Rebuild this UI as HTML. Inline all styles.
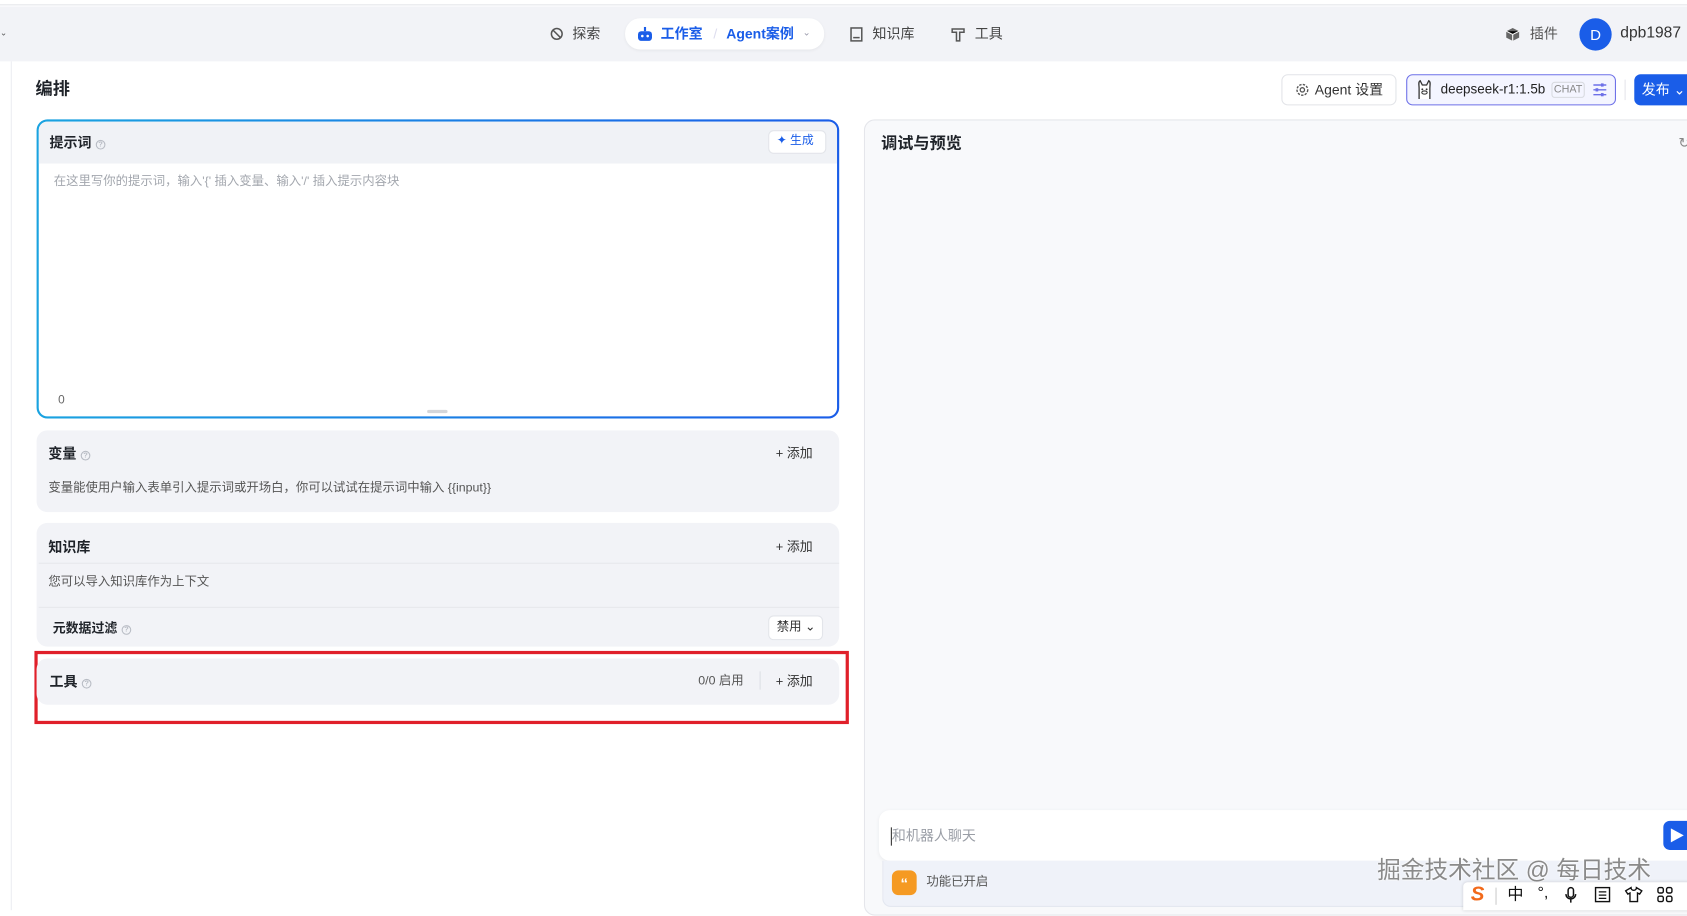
<!DOCTYPE html>
<html><head><meta charset="utf-8"><style>
*{box-sizing:border-box;margin:0;padding:0}
html,body{width:1687px;height:910px;overflow:hidden;background:#fff}
body{font-family:"Liberation Sans","Noto Sans CJK SC",sans-serif;color:#1f2329}
#w{position:absolute;left:0;top:0;width:1568px;height:846px;transform:scale(1.07589);transform-origin:0 0;background:#fff}
.a{position:absolute}
.t{position:absolute;white-space:nowrap;line-height:1}
.card{position:absolute;left:34px;width:746px;background:#f2f3f7;border-radius:10px}
.q{display:inline-block;width:9px;height:9px;border:1px solid #b8bcc4;border-radius:50%;font-size:7px;color:#b8bcc4;text-align:center;line-height:8px;vertical-align:1px;margin-left:4px}
.b{font-weight:bold;font-size:13px;color:#1f2329}
.add{font-size:12px;color:#333}
</style></head><body><div id="w">
<div class="a" style="left:0;top:0;width:1568px;height:5px;background:#fff;border-bottom:1px solid #e3e5ea"></div>
<div class="a" style="left:0;top:6px;width:1568px;height:51px;background:#f2f3f7"></div>
<div class="t" style="left:0;top:27px;font-size:8px;color:#555">⌄</div>
<svg class="a" style="left:511px;top:25px" width="13" height="13" viewBox="0 0 13 13"><circle cx="6.5" cy="6.5" r="5" fill="none" stroke="#555" stroke-width="1.4"/><path d="M3 3l7 7" stroke="#555" stroke-width="1.4"/></svg>
<div class="t" style="left:532px;top:25px;font-size:13px;color:#444">探索</div>
<div class="a" style="left:581px;top:17px;width:185px;height:29px;background:#fff;border-radius:14px;box-shadow:0 1px 3px rgba(0,0,0,.06)"></div>
<svg class="a" style="left:592px;top:25px" width="15" height="14" viewBox="0 0 15 14"><rect x="1" y="4" width="13" height="9" rx="3" fill="#1a5de8"/><rect x="6.5" y="0" width="2" height="4" fill="#1a5de8"/><circle cx="5" cy="8.5" r="1.2" fill="#fff"/><circle cx="10" cy="8.5" r="1.2" fill="#fff"/></svg>
<div class="t" style="left:614px;top:25px;font-size:13px;color:#1a5de8;font-weight:bold">工作室</div>
<div class="t" style="left:663px;top:25px;font-size:13px;color:#dde">/</div>
<div class="t" style="left:675px;top:25px;font-size:13px;color:#1a5de8;font-weight:bold">Agent案例</div>
<div class="t" style="left:746px;top:26px;font-size:9px;color:#99a">⌄</div>
<svg class="a" style="left:790px;top:25px" width="12" height="14" viewBox="0 0 12 14"><rect x="1" y="1" width="10" height="12" fill="none" stroke="#555" stroke-width="1.4"/><path d="M3 10h6" stroke="#555" stroke-width="1.4"/></svg>
<div class="t" style="left:811px;top:25px;font-size:13px;color:#444">知识库</div>
<svg class="a" style="left:884px;top:25px" width="13" height="14" viewBox="0 0 13 14"><path d="M1 2h11v3H8v8H5V5H1z" fill="none" stroke="#555" stroke-width="1.4"/></svg>
<div class="t" style="left:906px;top:25px;font-size:13px;color:#444">工具</div>
<svg class="a" style="left:1399px;top:25px" width="14" height="14" viewBox="0 0 14 14"><path d="M7 1l6 3v6l-6 3-6-3V4z" fill="#666"/><path d="M1 4l6 3 6-3M7 7v6" stroke="#fff" stroke-width="1"/></svg>
<div class="t" style="left:1422px;top:25px;font-size:13px;color:#555">插件</div>
<div class="a" style="left:1468px;top:17px;width:30px;height:30px;border-radius:50%;background:#1a5de8;color:#fff;font-size:14px;text-align:center;line-height:30px">D</div>
<div class="t" style="left:1506px;top:24px;font-size:14.5px;color:#333">dpb1987</div>

<div class="a" style="left:10px;top:57px;width:1px;height:789px;background:#eceef2"></div>
<div class="t" style="left:33px;top:76px;font-size:16px;font-weight:bold">编排</div>

<div class="a" style="left:1191px;top:69px;width:107px;height:29px;border:1px solid #e2e4e8;border-radius:6px;background:#fff"></div>
<svg class="a" style="left:1204px;top:77px" width="13" height="13" viewBox="0 0 13 13"><circle cx="6.5" cy="6.5" r="5" fill="none" stroke="#555" stroke-width="1.3" stroke-dasharray="2.2 1.2"/><circle cx="6.5" cy="6.5" r="2" fill="none" stroke="#555" stroke-width="1.2"/></svg>
<div class="t" style="left:1222px;top:77px;font-size:13px;color:#333">Agent 设置</div>
<div class="a" style="left:1307px;top:69px;width:195px;height:29px;border:1px solid #6d70e8;border-radius:6px;background:#f4f5ff"></div>
<svg class="a" style="left:1316px;top:74px" width="16" height="19" viewBox="0 0 16 19"><path d="M3 18V8C3 5 2 2 4 1l2 4h4l2-4c2 1 1 4 1 7v10" fill="#fff" stroke="#333" stroke-width="1.2"/><circle cx="6" cy="9" r=".9" fill="#333"/><circle cx="10" cy="9" r=".9" fill="#333"/><ellipse cx="8" cy="12" rx="2.5" ry="1.5" fill="none" stroke="#333"/></svg>
<div class="t" style="left:1339px;top:77px;font-size:12.5px;color:#222">deepseek-r1:1.5b</div>
<div class="t" style="left:1442px;top:76px;width:31px;height:15px;border:1px solid #d8dae0;border-radius:3px;font-size:10px;color:#888;text-align:center;line-height:13px">CHAT</div>
<svg class="a" style="left:1480px;top:77px" width="14" height="13" viewBox="0 0 14 13"><path d="M1 2h12M1 6.5h12M1 11h12" stroke="#6d70e8" stroke-width="1.3"/><rect x="8" y="0.5" width="2.5" height="3" fill="#6d70e8"/><rect x="3" y="5" width="2.5" height="3" fill="#6d70e8"/><rect x="8" y="9.5" width="2.5" height="3" fill="#6d70e8"/></svg>
<div class="a" style="left:1510px;top:74px;width:1px;height:19px;background:#e5e6eb"></div>
<div class="a" style="left:1519px;top:69px;width:60px;height:29px;background:#1a5de8;border-radius:6px"></div>
<div class="t" style="left:1526px;top:77px;font-size:13px;color:#fff">发布 ⌄</div>

<div class="a" style="left:34px;top:111px;width:746px;height:278px;border-radius:10px;background:linear-gradient(90deg,#1aa3e0,#1a5de8);padding:2px">
 <div style="width:100%;height:100%;background:#fff;border-radius:8px;overflow:hidden">
  <div style="height:39px;background:#f0f2f6"></div>
 </div>
</div>
<div class="t b" style="left:46px;top:126px">提示词<span class="q">?</span></div>
<div class="a" style="left:714px;top:121px;width:54px;height:22px;background:#fff;border:1px solid #e3e5ea;border-radius:5px"></div>
<div class="t" style="left:722px;top:126px;font-size:11px;color:#1a5de8">✦ 生成</div>
<div class="t" style="left:50px;top:164px;font-size:11.5px;color:#a3a7ae">在这里写你的提示词，输入'{' 插入变量、输入'/' 插入提示内容块</div>
<div class="t" style="left:54px;top:367px;font-size:11px;color:#666">0</div>
<div class="a" style="left:397px;top:381px;width:19px;height:3px;background:#d4d6da;border-radius:2px"></div>

<div class="card" style="top:400px;height:76px"></div>
<div class="t b" style="left:45px;top:415px">变量<span class="q">?</span></div>
<div class="t add" style="left:721px;top:415px">+ 添加</div>
<div class="t" style="left:45px;top:449px;font-size:11.5px;color:#555">变量能使用户输入表单引入提示词或开场白，你可以试试在提示词中输入 {{input}}</div>

<div class="card" style="top:486px;height:115px"></div>
<div class="a" style="left:36px;top:523px;width:744px;height:1px;background:#e6e8ec"></div>
<div class="a" style="left:36px;top:564px;width:744px;height:1px;background:#e6e8ec"></div>
<div class="t b" style="left:45px;top:502px">知识库</div>
<div class="t add" style="left:721px;top:502px">+ 添加</div>
<div class="t" style="left:45px;top:536px;font-size:11.5px;color:#555">您可以导入知识库作为上下文</div>
<div class="t" style="left:49px;top:578px;font-size:12px;font-weight:bold">元数据过滤<span class="q">?</span></div>
<div class="a" style="left:714px;top:572px;width:51px;height:23px;background:#fff;border:1px solid #e3e5ea;border-radius:5px"></div>
<div class="t" style="left:722px;top:578px;font-size:11.5px;color:#333">禁用 ⌄</div>

<div class="a" style="left:32px;top:605px;width:757px;height:68px;border:3px solid #e0202a"></div>
<div class="card" style="top:612px;height:43px"></div>
<div class="t b" style="left:46px;top:627px">工具<span class="q">?</span></div>
<div class="t" style="left:649px;top:628px;font-size:11.5px;color:#555">0/0 启用</div>
<div class="a" style="left:706px;top:624px;width:1px;height:17px;background:#dde0e5"></div>
<div class="t add" style="left:721px;top:627px">+ 添加</div>

<div class="a" style="left:803px;top:111px;width:780px;height:740px;background:#f8f9fb;border:1px solid #e5e6eb;border-radius:10px"></div>
<div class="t" style="left:819px;top:126px;font-size:15px;font-weight:bold">调试与预览</div>
<div class="t" style="left:1560px;top:126px;font-size:13px;color:#888">↻</div>
<div class="a" style="left:817px;top:753px;width:770px;height:47px;background:#fff;border-radius:10px;box-shadow:0 1px 4px rgba(0,0,0,.06)"></div>
<div class="a" style="left:828px;top:769px;width:1px;height:17px;background:#333"></div>
<div class="t" style="left:829px;top:770px;font-size:13px;color:#9a9ea6">和机器人聊天</div>
<div class="a" style="left:1546px;top:763px;width:30px;height:27px;background:#1a5de8;border-radius:6px"></div>
<svg class="a" style="left:1552px;top:769px" width="14" height="15" viewBox="0 0 14 15"><path d="M1 1l12 6.5L1 14z" fill="#fff"/></svg>
<div class="a" style="left:820px;top:800px;width:760px;height:43px;background:#eff2f9;border-radius:0 0 8px 8px;border:1px solid #e3e7f0;border-top:none"></div>
<div class="a" style="left:829px;top:809px;width:23px;height:23px;background:#f59a23;border-radius:6px;color:#fff;font-size:14px;text-align:center;line-height:25px;font-weight:bold">“</div>
<div class="t" style="left:861px;top:815px;font-size:11.5px;color:#555">功能已开启</div>

<div class="t" style="left:1280px;top:798px;font-size:22px;color:#8a8a8a;text-shadow:0 0 2px #fff,0 0 2px #fff">掘金技术社区 @ 每日技术</div>
<div class="a" style="left:1360px;top:820px;width:215px;height:26px;background:#fff;border-radius:4px 0 0 0;box-shadow:0 0 3px rgba(0,0,0,.15)"></div>
<div class="t" style="left:1367px;top:822px;font-size:19px;color:#f26a1b;font-weight:bold;font-style:italic">S</div>
<div class="a" style="left:1390px;top:825px;width:1px;height:16px;background:#ccc"></div>
<div class="t" style="left:1401px;top:824px;font-size:15px;color:#111">中</div>
<div class="t" style="left:1429px;top:822px;font-size:15px;color:#111">°,</div>
<svg class="a" style="left:1454px;top:824px" width="12" height="16" viewBox="0 0 12 16"><rect x="3.5" y="1" width="5" height="9" rx="2.5" fill="none" stroke="#111" stroke-width="1.4"/><path d="M1.5 7a4.5 4.5 0 009 0M6 11.5V15" fill="none" stroke="#111" stroke-width="1.4"/></svg>
<svg class="a" style="left:1482px;top:824px" width="15" height="15" viewBox="0 0 15 15"><rect x="1" y="1" width="13" height="13" fill="none" stroke="#111" stroke-width="1.3"/><path d="M4 5h7M4 8h7M4 11h7" stroke="#111" stroke-width="1.2"/></svg>
<svg class="a" style="left:1510px;top:824px" width="17" height="15" viewBox="0 0 17 15"><path d="M6 1L1 4l2 3 2-1v8h7V6l2 1 2-3-5-3c0 1.5-1 2.5-2.5 2.5S6 2.5 6 1z" fill="none" stroke="#111" stroke-width="1.3"/></svg>
<svg class="a" style="left:1540px;top:824px" width="15" height="15" viewBox="0 0 15 15"><rect x="1" y="1" width="5" height="5" rx="1.5" fill="none" stroke="#111" stroke-width="1.3"/><rect x="9" y="1" width="5" height="5" rx="1.5" fill="none" stroke="#111" stroke-width="1.3"/><rect x="1" y="9" width="5" height="5" rx="1.5" fill="none" stroke="#111" stroke-width="1.3"/><rect x="9" y="9" width="5" height="5" rx="1.5" fill="none" stroke="#111" stroke-width="1.3"/></svg>
</div></body></html>
